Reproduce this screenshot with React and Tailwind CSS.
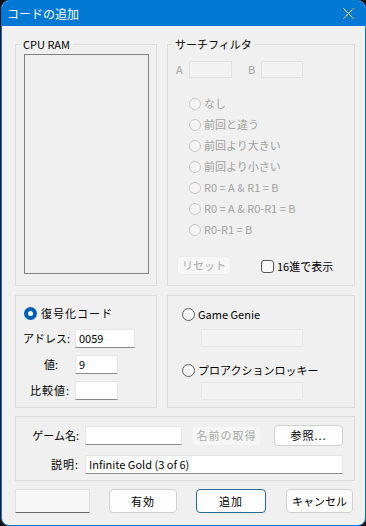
import React from "react";

const FONT = { fontFamily: '"Noto Sans CJK JP", "Noto Sans", sans-serif' };

const FILTERS = [
  "なし",
  "前回と違う",
  "前回より大きい",
  "前回より小さい",
  "R0 = A & R1 = B",
  "R0 = A & R0-R1 = B",
  "R0-R1 = B",
];

function Radio({ checked, disabled }) {
  if (checked) {
    return (
      <span className="w-[13px] h-[13px] rounded-full bg-[#005fb8] flex items-center justify-center shrink-0">
        <span className="w-[5px] h-[5px] rounded-full bg-white" />
      </span>
    );
  }
  return (
    <span
      className={
        disabled
          ? "w-[12px] h-[12px] rounded-full border border-[#c8c8c8] bg-[#f5f5f5] shrink-0"
          : "w-[13px] h-[13px] rounded-full border border-[#5a5a5a] bg-[#f8f8f8] shrink-0"
      }
    />
  );
}

function TextBox({ w, value }) {
  return (
    <div
      className={`${w} h-[19px] bg-white border border-[#e5e5e5] border-b-[#8a8a8a] flex items-center px-[3px] text-black`}
    >
      {value}
    </div>
  );
}

export default function App() {
  return (
    <div className="w-[366px] h-[526px] bg-[#111111] pl-[1px] text-[11px]" style={FONT}>
      <div className="h-full flex flex-col rounded-[8px] overflow-hidden border border-[#0078d4] bg-[#f0f0f0]">
        {/* Title bar */}
        <div className="h-[25px] bg-[#0078d4] flex items-center justify-between pl-[5px] pr-[11px] shrink-0">
          <span className="text-white text-[12px] leading-none">コードの追加</span>
          <svg width="11" height="11" viewBox="0 0 11 11">
            <path d="M0.5 0.5 L10.5 10.5 M10.5 0.5 L0.5 10.5" stroke="white" strokeWidth="1" />
          </svg>
        </div>

        <div className="flex-1 pl-[13px] pr-[10px] pt-[10px]">
          {/* Row 1 */}
          <div className="grid grid-cols-[142px_1fr] gap-[10px]">
            <fieldset className="h-[250px] border border-[#dcdcdc]">
              <legend className="ml-[4px] px-[3px] leading-[16px] text-black">CPU RAM</legend>
              <div className="ml-[8px] mt-[2px] w-[125px] h-[220px] border border-[#828282]" />
            </fieldset>

            <fieldset className="h-[250px] border border-[#dcdcdc]">
              <legend className="ml-[4px] px-[3px] leading-[16px] text-black">サーチフィルタ</legend>
              <div className="flex items-center mt-[9px] pl-[8px] text-[#a0a0a0]">
                <span className="w-[13px]">A</span>
                <div className="w-[43px] h-[17px] border border-[#e2e2e2] bg-[#f2f2f2]" />
                <span className="ml-[16px] w-[13px]">B</span>
                <div className="w-[42px] h-[17px] border border-[#e2e2e2] bg-[#f2f2f2]" />
              </div>
              <div className="mt-[15px] pl-[21px] flex flex-col">
                {FILTERS.map((f) => (
                  <div key={f} className="h-[21px] flex items-center gap-[3px] text-[#a0a0a0]">
                    <Radio disabled />
                    <span>{f}</span>
                  </div>
                ))}
              </div>
              <div className="mt-[16px] pl-[9px] flex items-center">
                <div className="w-[54px] h-[19px] rounded-[3px] bg-[#f6f6f6] border border-[#ececec] text-[#a8a8a8] flex items-center pl-[4px]">
                  リセット
                </div>
                <span className="ml-[30px] mt-[2px] w-[13px] h-[13px] rounded-[3px] border border-[#5a5a5a] bg-[#f8f8f8]" />
                <span className="ml-[3px] mt-[2px] text-black">16進で表示</span>
              </div>
            </fieldset>
          </div>

          {/* Row 2 */}
          <div className="grid grid-cols-[142px_1fr] gap-[10px] mt-[9px]">
            <div className="h-[113px] border border-[#dcdcdc] pt-[11px]">
              <div className="pl-[8px] flex items-center gap-[4px] h-[13px] text-black tracking-[1px]">
                <Radio checked />
                <span>復号化コード</span>
              </div>
              <div className="mt-[9px] flex flex-col gap-[7px]">
                <div className="flex items-center">
                  <span className="w-[54px] text-right whitespace-nowrap text-black">アドレス:</span>
                  <div className="ml-[5px]">
                    <TextBox w="w-[60px]" value="0059" />
                  </div>
                </div>
                <div className="flex items-center">
                  <span className="w-[54px] text-right pr-[12px] text-black">値:</span>
                  <div className="ml-[5px]">
                    <TextBox w="w-[43px]" value="9" />
                  </div>
                </div>
                <div className="flex items-center">
                  <span className="w-[54px] text-right whitespace-nowrap text-black tracking-[1px]">比較値:</span>
                  <div className="ml-[5px]">
                    <TextBox w="w-[43px]" value="" />
                  </div>
                </div>
              </div>
            </div>

            <div className="h-[113px] border border-[#dcdcdc] pl-[14px] pt-[12px]">
              <div className="flex items-center gap-[3px] h-[13px] text-black">
                <Radio />
                <span>Game Genie</span>
              </div>
              <div className="ml-[19px] mt-[8px] w-[102px] h-[18px] border border-[#e6e6e6] bg-[#f2f2f2]" />
              <div className="mt-[17px] flex items-center gap-[3px] h-[13px] text-black">
                <Radio />
                <span>プロアクションロッキー</span>
              </div>
              <div className="ml-[19px] mt-[5px] w-[102px] h-[18px] border border-[#e6e6e6] bg-[#f2f2f2]" />
            </div>
          </div>

          {/* Row 3 */}
          <div className="mt-[8px] h-[65px] border border-[#dcdcdc] pt-[8px] flex flex-col gap-[9px]">
            <div className="flex items-center">
              <span className="w-[63px] text-right whitespace-nowrap text-black">ゲーム名:</span>
              <div className="ml-[6px]">
                <TextBox w="w-[97px]" value="" />
              </div>
              <div className="ml-[11px] w-[67px] h-[18px] rounded-[3px] bg-[#f6f6f6] text-[#a8a8a8] flex items-center justify-center tracking-[1px]">
                名前の取得
              </div>
              <div className="ml-[14px] w-[69px] h-[21px] rounded-[4px] bg-[#fdfdfd] border border-[#d0d0d0] text-black flex items-center justify-center tracking-[1px]">
                参照...
              </div>
            </div>
            <div className="flex items-center">
              <span className="w-[63px] text-right text-black tracking-[1px]">説明:</span>
              <div className="ml-[6px]">
                <TextBox w="w-[258px]" value="Infinite Gold (3 of 6)" />
              </div>
            </div>
          </div>

          {/* Buttons */}
          <div className="mt-[8px] flex items-center">
            <div className="w-[75px] h-[24px] bg-[#f6f6f6] border border-[#e0e0e0] border-b-[#6a6a6a]" />
            <div className="ml-[19px] w-[68px] h-[24px] rounded-[4px] bg-[#fdfdfd] border border-[#d0d0d0] text-black flex items-center justify-center tracking-[1px]">
              有効
            </div>
            <div className="ml-[19px] w-[70px] h-[24px] rounded-[4px] bg-[#fdfdfd] border border-[#2a6a90] text-black flex items-center justify-center tracking-[1px]">
              追加
            </div>
            <div className="ml-[20px] w-[67px] h-[24px] rounded-[4px] bg-[#fdfdfd] border border-[#d0d0d0] text-black flex items-center justify-center">
              キャンセル
            </div>
          </div>
        </div>
      </div>
    </div>
  );
}
